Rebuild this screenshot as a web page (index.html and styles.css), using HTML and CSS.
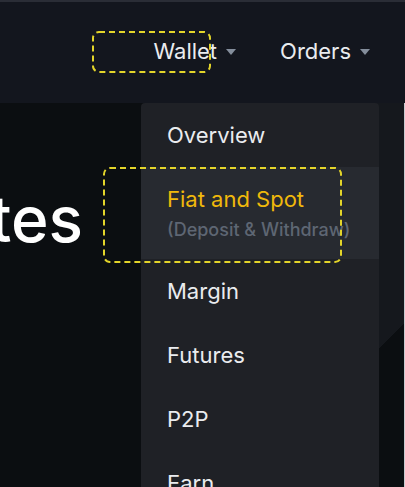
FILE: index.html
```html
<!DOCTYPE html>
<html lang="en">
<head>
<meta charset="utf-8">
<title>Wallet menu</title>
<link rel="stylesheet" href="styles.css">
</head>
<body>
<div class="page">
  <header class="topbar">
    <nav class="nav">
      <div class="nav-item">
        <span class="nav-label">Wallet</span>
        <svg class="caret" viewBox="0 0 10 6" width="10" height="6"><path d="M0 0H10L5 6Z"/></svg>
      </div>
      <div class="nav-item">
        <span class="nav-label">Orders</span>
        <svg class="caret" viewBox="0 0 10 6" width="10" height="6"><path d="M0 0H10L5 6Z"/></svg>
      </div>
    </nav>
  </header>
  <main class="main">
    <section class="hero">
      <h1 class="hero-title">minutes</h1>
    </section>
    <ul class="menu">
      <li class="menu-item">Overview</li>
      <li class="menu-item active">
        <span class="menu-title">Fiat and Spot</span>
        <span class="menu-sub">(Deposit &amp; Withdraw)</span>
      </li>
      <li class="menu-item">Margin</li>
      <li class="menu-item">Futures</li>
      <li class="menu-item">P2P</li>
      <li class="menu-item">Earn</li>
    </ul>
    <div class="side"></div>
  </main>
</div>
<svg class="mark mark-wallet" width="119" height="42" viewBox="0 0 119 42"><rect x="1" y="1" width="117" height="40" rx="6" ry="6"/></svg>
<svg class="mark mark-fiat" width="239" height="96" viewBox="0 0 239 96"><rect x="1" y="1" width="237" height="94" rx="6" ry="6"/></svg>
</body>
</html>
```

FILE: styles.css
```css
* { box-sizing: border-box; }

html, body {
  margin: 0;
  padding: 0;
}

body {
  width: 405px;
  height: 487px;
  overflow: hidden;
  background: #0b0e11;
  font-family: Inter, "Noto Sans", sans-serif;
  position: relative;
}

.page {
  width: 405px;
  height: 487px;
  display: flex;
  flex-direction: column;
}

.topbar {
  height: 103px;
  flex: none;
  background: #13161e;
  border-top: 2px solid #2a2d36;
  display: flex;
  justify-content: flex-end;
  padding-top: 29px;
  padding-right: 35px;
}

.nav {
  display: flex;
  gap: 44px;
  height: 40px;
}

.nav-item {
  display: flex;
  align-items: center;
  gap: 9px;
  color: #eaecef;
  font-size: 22px;
  font-weight: 400;
  line-height: 40px;
}

.caret {
  fill: #848e9c;
  margin-top: 2px;
}

.main {
  flex: 1;
  display: grid;
  grid-template-columns: 141px 238px 1fr;
  overflow: hidden;
  border-right: 1px solid #c9cbd0;
  background-color: #0b0e11;
  background-image: linear-gradient(135deg, #15181d 50%, #0b0e11 50%);
  background-size: 480px 480px;
  background-position: 145px 0;
  background-repeat: no-repeat;
}

.hero {
  display: flex;
  justify-content: flex-end;
  width: 83px;
}

.hero-title {
  margin: 84px 0 0;
  font-size: 64px;
  line-height: 64px;
  font-weight: 500;
  color: #ffffff;
  white-space: nowrap;
}

.menu {
  list-style: none;
  margin: 0;
  padding: 0;
  background: #1f2126;
  border-radius: 4px 4px 0 0;
}

.menu-item {
  height: 64px;
  line-height: 64px;
  padding-left: 26px;
  color: #eaecef;
  font-size: 22px;
  font-weight: 400;
}

.menu-item.active {
  height: 92px;
  line-height: normal;
  padding-top: 17px;
  background: #272a30;
  display: flex;
  flex-direction: column;
}

.menu-title {
  color: #f0b90b;
  line-height: 30px;
}

.menu-sub {
  color: #5e6673;
  font-size: 18px;
  font-weight: 500;
  line-height: 30px;
  margin-top: 1px;
}

.side {
  min-height: 0;
}

.mark {
  position: absolute;
  fill: none;
  stroke: #e3d52a;
  stroke-width: 2;
  stroke-dasharray: 6 4;
}

.mark-wallet {
  left: 92px;
  top: 31px;
}

.mark-fiat {
  left: 103px;
  top: 167px;
}
```
